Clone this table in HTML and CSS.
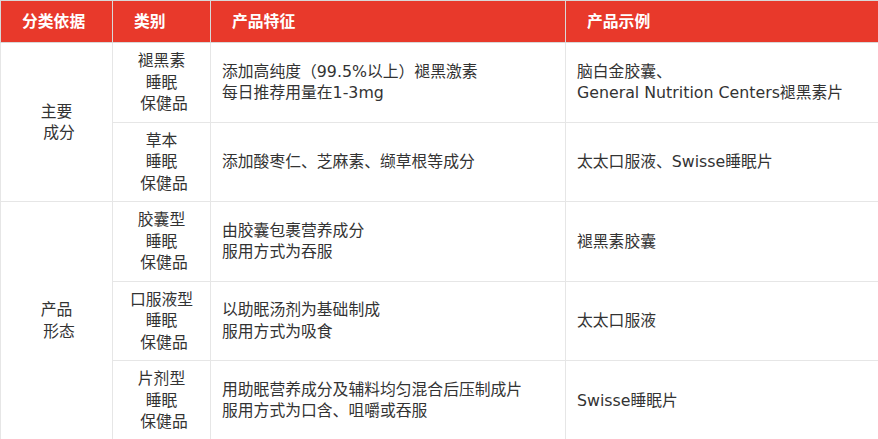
FILE: index.html
```html
<!DOCTYPE html>
<html lang="zh">
<head>
<meta charset="utf-8">
<link rel="stylesheet" href="styles.css">
</head>
<body>
<table class="tbl">
  <colgroup>
    <col class="c1"><col class="c2"><col class="c3"><col class="c4">
  </colgroup>
  <thead>
    <tr>
      <th>分类依据</th><th>类别</th><th>产品特征</th><th>产品示例</th>
    </tr>
  </thead>
  <tbody>
    <tr>
      <td class="ctr" rowspan="2">主要<br>&nbsp;成分</td>
      <td class="ctr">褪黑素<br>睡眠<br>&nbsp;保健品</td>
      <td>添加高纯度（99.5%以上）褪黑激素<br>每日推荐用量在1-3mg</td>
      <td>脑白金胶囊、<br>General Nutrition Centers褪黑素片</td>
    </tr>
    <tr>
      <td class="ctr">草本<br>睡眠<br>&nbsp;保健品</td>
      <td>添加酸枣仁、芝麻素、缬草根等成分</td>
      <td>太太口服液、Swisse睡眠片</td>
    </tr>
    <tr>
      <td class="ctr" rowspan="3">产品<br>&nbsp;形态</td>
      <td class="ctr">胶囊型<br>睡眠<br>&nbsp;保健品</td>
      <td>由胶囊包裹营养成分<br>服用方式为吞服</td>
      <td>褪黑素胶囊</td>
    </tr>
    <tr>
      <td class="ctr">口服液型<br>睡眠<br>&nbsp;保健品</td>
      <td>以助眠汤剂为基础制成<br>服用方式为吸食</td>
      <td>太太口服液</td>
    </tr>
    <tr>
      <td class="ctr">片剂型<br>睡眠<br>&nbsp;保健品</td>
      <td>用助眠营养成分及辅料均匀混合后压制成片<br>服用方式为口含、咀嚼或吞服</td>
      <td>Swisse睡眠片</td>
    </tr>
  </tbody>
</table>
</body>
</html>
```

FILE: styles.css
```css
html, body {
  margin: 0;
  padding: 0;
  background: #ffffff;
}

body {
  font-family: "DejaVu Sans", "Noto Sans CJK SC", sans-serif;
  font-size: 15.8px;
  color: #333333;
}

.tbl {
  width: 878px;
  border-collapse: collapse;
  table-layout: fixed;
}

.c1 { width: 112px; }
.c2 { width: 98px; }
.c3 { width: 355px; }
.c4 { width: 313px; }

.tbl th {
  background: #e8392b;
  color: #ffffff;
  font-weight: bold;
  text-align: left;
  height: 42px;
  padding: 0 0 0 21px;
  border: 1px solid #d8d8d8;
  box-sizing: border-box;
  line-height: 21.5px;
}

.tbl td {
  border: 1px solid #e6e6e6;
  padding: 7px 10px 7px 11px;
  line-height: 21.5px;
  height: 64px;
  vertical-align: middle;
  text-align: left;
}

.tbl td.ctr {
  text-align: center;
  padding-left: 0;
  padding-right: 0;
}
```
